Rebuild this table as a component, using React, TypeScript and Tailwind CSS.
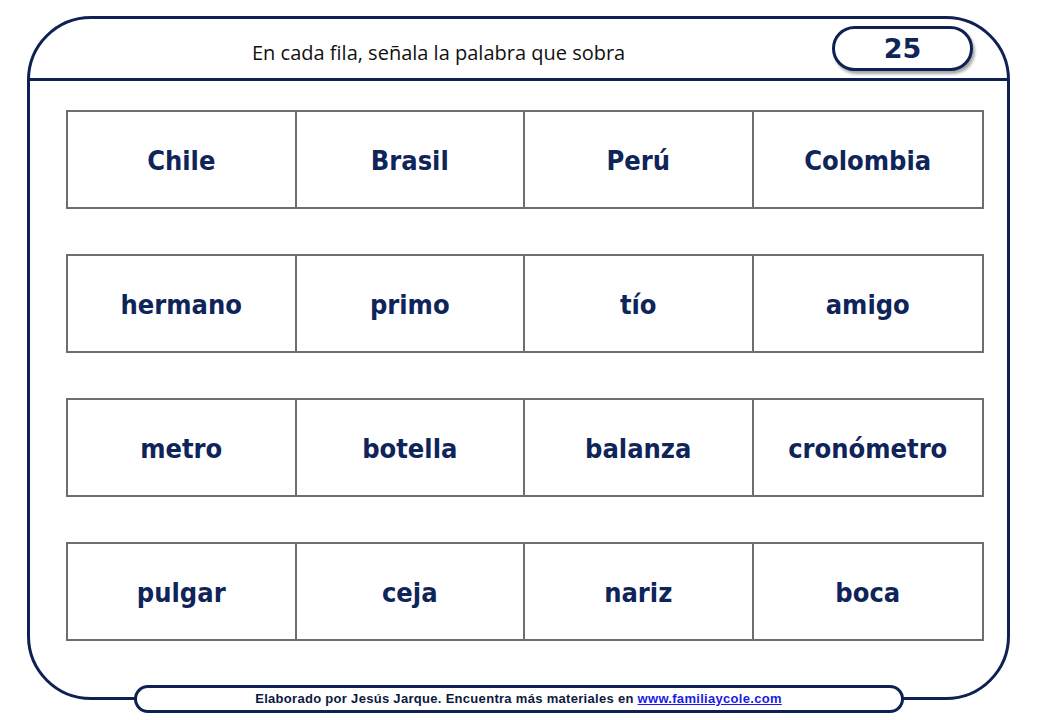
const rows: string[][] = [
  ["Chile", "Brasil", "Perú", "Colombia"],
  ["hermano", "primo", "tío", "amigo"],
  ["metro", "botella", "balanza", "cronómetro"],
  ["pulgar", "ceja", "nariz", "boca"],
];

function WordRow({ words }: { words: string[] }) {
  return (
    <div className="grid grid-cols-4 h-[99px] border-2 border-[#6e6e6e] divide-x-2 divide-[#6e6e6e]">
      {words.map(function (word) {
        return (
          <div
            key={word}
            className="flex items-center justify-center pt-[4px] text-[27px] font-bold text-[#0f2559] font-['DejaVu_Sans_Condensed','DejaVu_Sans',sans-serif]"
          >
            {word}
          </div>
        );
      })}
    </div>
  );
}

function App() {
  return (
    <div className="w-[1040px] h-[720px] bg-white overflow-hidden pt-[16px] pl-[27px]">
      <div className="relative w-[983px] h-[684px] border-[3px] border-[#0e2152] rounded-[64px]">
        {/* header */}
        <div className="flex items-start h-[62px] border-b-[3px] border-[#0e2152]">
          <div className="pl-[222px] pt-[19px] text-[20px] text-[#111] font-['Open_Sans',sans-serif]">
            En cada fila, señala la palabra que sobra
          </div>
          <div className="ml-auto mr-[34px] mt-[7px] w-[141px] h-[45px] rounded-full border-[3px] border-[#0e2152] bg-white shadow-[2px_3px_3px_rgba(0,0,0,0.35)] flex items-center justify-center">
            <span className="text-[27px] font-bold text-[#0f2559] font-['DejaVu_Sans',sans-serif] leading-none">25</span>
          </div>
        </div>

        {/* word rows */}
        <div className="ml-[36px] w-[918px] pt-[29px] flex flex-col gap-[45px]">
          {rows.map(function (r, i) {
            return <WordRow key={i} words={r} />;
          })}
        </div>

        {/* footer pill */}
        <div className="absolute left-1/2 -translate-x-1/2 -bottom-[16px] w-[770px] h-[28px] rounded-full border-[3px] border-[#0e2152] bg-white flex items-center justify-center">
          <span className="text-[13px] tracking-[0.3px] font-bold text-[#0a1a3f] font-['Liberation_Sans',Arial,sans-serif]">
            Elaborado por Jesús Jarque. Encuentra más materiales en{" "}
            <a href="#" className="text-[#1a1ae6] underline">www.familiaycole.com</a>
          </span>
        </div>
      </div>
    </div>
  );
}

export default App;
